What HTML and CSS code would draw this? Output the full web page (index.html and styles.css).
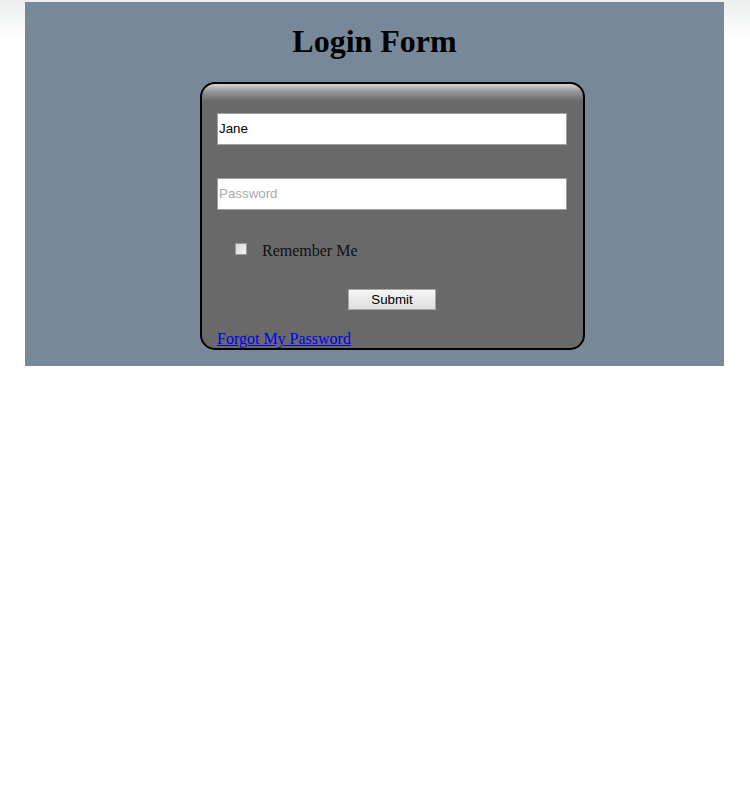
FILE: index.html
```html
<!DOCTYPE html>
<html>
<head>
<meta charset="utf-8">
<title>Login Form</title>
<link rel="stylesheet" href="styles.css">
</head>
<body>
<div class="page">
  <h1 class="title">Login Form</h1>
  <form class="box">
    <input class="field" type="text" value="Jane">
    <input class="field" type="password" placeholder="Password">
    <label class="remember"><input class="check" type="checkbox"><span>Remember Me</span></label>
    <div class="actions"><button class="submit" type="button">Submit</button></div>
    <a class="forgot" href="#">Forgot My Password</a>
  </form>
</div>
</body>
</html>
```
FILE: styles.css
```css
html {
  background: linear-gradient(to bottom, #eceeee 0, #ffffff 42px) no-repeat;
  background-color: #fff;
  min-height: 100%;
}
body {
  margin: 0;
  padding-top: 2px;
  font-family: "Liberation Serif", "Times New Roman", serif;
}
.page {
  display: flow-root;
  width: 699px;
  margin-left: 25px;
  background: #778899;
}
.title {
  font-size: 32px;
  font-weight: bold;
  text-align: center;
  margin: 21.44px 0;
  line-height: normal;
  color: #000;
}
.box {
  box-sizing: border-box;
  width: 385px;
  margin: 0 0 16px 175px;
  padding: 29px 16px 0 15px;
  border: 2px solid #000;
  border-radius: 15px;
  background: linear-gradient(to bottom, #d6d6d6 0, #9a9a9a 7px, #696969 17px) #696969;
}
.field {
  display: block;
  box-sizing: border-box;
  width: 350px;
  height: 32px;
  margin: 0 0 33px 0;
  padding: 0 1px;
  border: 1px solid #a0a0a0;
  background: #fff;
  font-family: "Liberation Sans", Arial, sans-serif;
  font-size: 13.33px;
  color: #000;
  outline: none;
}
.field::placeholder { color: #a9a9a9; }
.remember {
  display: flex;
  align-items: center;
  margin-top: -1px;
  padding-left: 18px;
  height: 18px;
  font-size: 16px;
  color: #111;
}
.check {
  appearance: none;
  -webkit-appearance: none;
  box-sizing: border-box;
  width: 12px;
  height: 12px;
  margin: -3px 15px 0 0;
  border: 1px solid #9a9a9a;
  background: linear-gradient(135deg, #d8d8d8, #f2f2f2);
}
.actions {
  display: flex;
  justify-content: center;
  margin-top: 29px;
}
.submit {
  box-sizing: border-box;
  width: 88px;
  height: 21px;
  padding: 0;
  border: 1px solid #a8a8a8;
  background: linear-gradient(to bottom, #f6f6f6, #dedede);
  font-family: "Liberation Sans", Arial, sans-serif;
  font-size: 13.33px;
  color: #000;
}
.forgot {
  display: block;
  margin-top: 20px;
  font-size: 16px;
  line-height: 18px;
  color: #0000ee;
  text-decoration: underline;
}
```
